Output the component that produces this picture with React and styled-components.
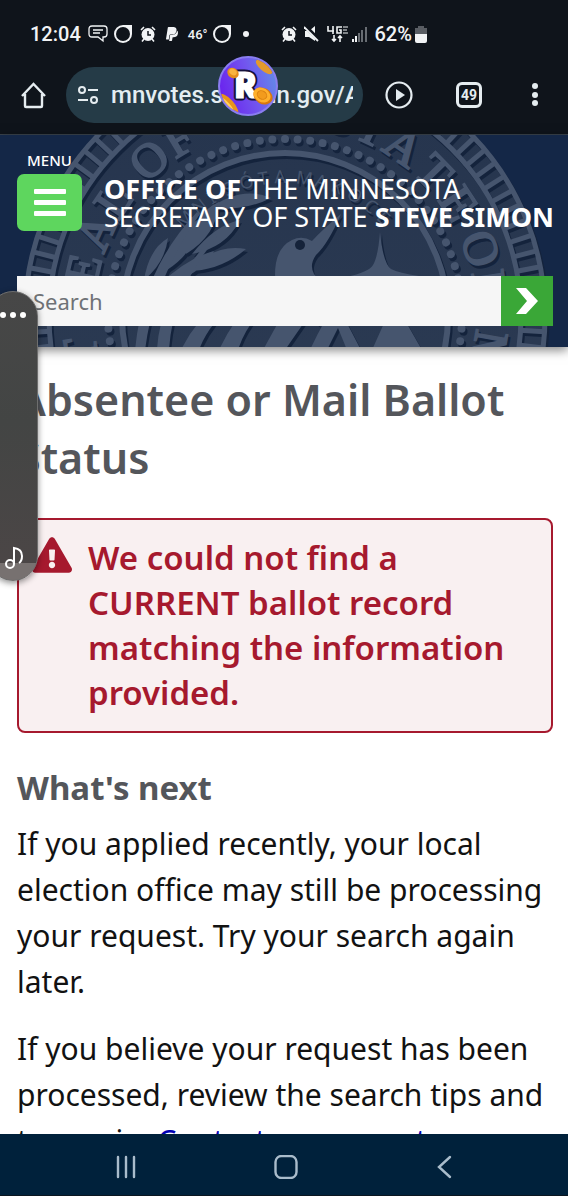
import React from 'react'
import styled, { createGlobalStyle } from 'styled-components'
import { FaPaypal, FaExclamationTriangle } from 'react-icons/fa'

const GlobalStyle = createGlobalStyle`
  * {
    box-sizing: border-box;
  }
  body {
    margin: 0;
    background: #ffffff;
    font-family: "Noto Sans", "Open Sans", sans-serif;
  }
  button {
    border: 0;
    padding: 0;
    background: none;
    color: inherit;
    font: inherit;
    cursor: pointer;
  }
  svg {
    display: block;
    flex: none;
  }
`;

const Phone = styled.div`
  position: relative;
  display: flex;
  flex-direction: column;
  height: 100vh;
  padding-bottom: 4px;
  overflow: hidden;
`;

const StatusBar = styled.div`
  display: flex;
  align-items: center;
  height: 56px;
  padding: 12px 29px 0 30px;
  background: #0f141b;
  color: #f1f3f5;
  font-family: Roboto, sans-serif;
  font-size: 20px;
  font-weight: 500;
`;

const StatusGroup = styled.div`
  display: flex;
  align-items: center;
  gap: ${props => props.gap};
  margin-left: ${props => props.indent || '0'};
`;

const Temperature = styled.span`
  font-size: 13px;
`;

const BrowserBar = styled.div`
  display: flex;
  align-items: center;
  height: 79px;
  padding: 0 30px 0 20px;
  background: #0f141b;
  border-bottom: 1px solid #3a434c;
  color: #e5ecf0;
`;

const AddressBar = styled.label`
  display: flex;
  align-items: center;
  flex: 1;
  min-width: 0;
  height: 56px;
  margin: 0 22px 0 19px;
  padding: 0 10px 0 11px;
  gap: 12px;
  border-radius: 28px;
  background: #253b47;
`;

const AddressInput = styled.input`
  flex: 1;
  min-width: 0;
  padding: 0;
  border: 0;
  background: none;
  outline: none;
  color: #e3edf2;
  font-family: Roboto, sans-serif;
  font-size: 24px;
  font-weight: 500;
`;

const BrowserActions = styled.div`
  display: flex;
  align-items: center;
  gap: 43px;
`;

const TabCount = styled.button`
  width: 26px;
  height: 26px;
  margin-right: 7px;
  border: 3px solid #e5ecf0;
  border-radius: 6px;
  font-family: Roboto, sans-serif;
  font-size: 14px;
  font-weight: 700;
  line-height: 20px;
`;

const SiteHeader = styled.header`
  position: relative;
  flex: none;
  height: 212px;
  padding: 16px 15px 0 17px;
  background: #142747;
  box-shadow: 0 3px 10px rgba(0, 0, 0, 0.5);
  z-index: 1;
`;

const SealLayer = styled.div`
  position: absolute;
  inset: 0;
  display: flex;
  justify-content: center;
  overflow: hidden;
`;

const HeaderRow = styled.div`
  position: relative;
  display: flex;
  align-items: flex-end;
  gap: 22px;
  height: 80px;
`;

const MenuButton = styled.button`
  display: flex;
  flex-direction: column;
  align-items: center;
  gap: 3px;
  width: 65px;
  color: #ffffff;
  font-size: 15px;
  font-weight: 500;
  line-height: 21px;
`;

const MenuIcon = styled.span`
  display: flex;
  flex-direction: column;
  align-items: center;
  justify-content: center;
  gap: 6px;
  width: 65px;
  height: 57px;
  border-radius: 7px;
  background: #5ed65e;
`;

const MenuLine = styled.span`
  width: 32px;
  height: 5px;
  border-radius: 1px;
  background: #ffffff;
`;

const OfficeName = styled.div`
  color: #ffffff;
  font-size: 27px;
  font-weight: 400;
  line-height: 28px;
  white-space: nowrap;
`;

const SearchForm = styled.form`
  position: relative;
  display: flex;
  height: 50px;
  margin-top: 45px;
`;

const SearchInput = styled.input`
  flex: 1;
  min-width: 0;
  padding: 0 16px;
  border: 0;
  border-radius: 0;
  outline: none;
  background: #f6f6f6;
  font-family: inherit;
  font-size: 22px;
  &::placeholder {
    color: #6f7276;
    opacity: 1;
  }
`;

const SearchButton = styled.button`
  display: flex;
  align-items: center;
  justify-content: center;
  width: 52px;
  background: #3aa737;
`;

const Content = styled.main`
  flex: 1;
  min-height: 0;
  padding: 24px 15px 0 17px;
  background: #ffffff;
  color: #121212;
  overflow: hidden;
`;

const Title = styled.h1`
  margin: 0 0 31px;
  color: #54565b;
  font-size: 43px;
  font-weight: 650;
  line-height: 58px;
`;

const Alert = styled.div`
  display: flex;
  gap: 16px;
  padding: 15px 20px 16px 13px;
  border: 2px solid #a6192e;
  border-radius: 8px;
  background: #f9f0f1;
  color: #a6192e;
  font-size: 33px;
  font-weight: 650;
  line-height: 45px;
`;

const Subtitle = styled.h2`
  margin: 32px 0 10px;
  color: #54565b;
  font-size: 33px;
  font-weight: 700;
  line-height: 46px;
`;

const Paragraph = styled.p`
  margin: 0 0 21px;
  font-size: 30px;
  line-height: 46px;
`;

const ContactLink = styled.a`
  color: #0000b4;
`;

const SystemNav = styled.nav`
  display: flex;
  align-items: center;
  justify-content: space-between;
  flex: none;
  height: 62px;
  padding: 4px 111px 0 114px;
  background: #00213b;
  border-bottom: 1px solid #0b1620;
  color: #a9bccb;
`;

const SidePanel = styled.aside`
  position: absolute;
  top: 291px;
  left: -12px;
  display: flex;
  flex-direction: column;
  justify-content: space-between;
  width: 50px;
  height: 290px;
  border-radius: 25px;
  border: 1px solid #6e6e6e;
  background: linear-gradient(#474747, #434544 45%, #4b4646 94%, #777170 94%);
  box-shadow: 0 2px 6px rgba(0, 0, 0, 0.45);
  overflow: hidden;
  z-index: 2;
`;

const Dots = styled.button`
  display: flex;
  gap: 4px;
  padding: 20px 0 0 11px;
`;

const Dot = styled.span`
  width: 6px;
  height: 6px;
  border-radius: 50%;
  background: #ffffff;
`;

const MusicButton = styled.button`
  padding: 0 0 10px 15px;
`;

const FloatingBadge = styled.div`
  position: absolute;
  top: 56px;
  left: 218px;
  z-index: 2;
`;

const ringLetters = [
  ['T', -100], ['E', -77], ['A', -66], ['L', -56], ['O', -41], ['F', -31],
  ['S', 16], ['T', 25], ['A', 35], ['T', 46], ['E', 57], ['O', 71], ['F', 81], ['M', 100]
]

const mottoLetters = [
  ['M', -46], ['N', -38], ['I', -32], ['S', -24], ['Ó', -16], ['T', -9], ['A', -2],
  ['M', 8], ['A', 15], ['K', 22], ['O', 30], ['C', 38], ['E', 45]
]

// evenly spaced angles for the beads and rim blocks
const steps = (count) => Array.from({ length: count }, (_, i) => (i * 360) / count)

const SealShapes = ({ tone }) => (
  <g fill={tone} stroke="none">
    <g fill="none" stroke={tone}>
      <circle r="260" strokeWidth="5" />
      <circle r="236" strokeWidth="5" />
      <circle r="163" strokeWidth="6" />
    </g>
    {steps(100).map(a => (
      <rect key={a} x="-3" y="-260" width="5" height="25" transform={`rotate(${a})`} />
    ))}
    {steps(88).map(a => (
      <circle key={a} cy="-177" r="4" transform={`rotate(${a})`} />
    ))}
    {ringLetters.map(([letter, a]) => (
      <text key={a} y="-191" fontSize="48" fontFamily="Liberation Serif, serif" stroke={tone} strokeWidth="2" textAnchor="middle" transform={`rotate(${a})`}>
        {letter}
      </text>
    ))}
    {mottoLetters.map(([letter, a]) => (
      <text key={a} y="-133" fontSize="18" fontFamily="Noto Sans, sans-serif" textAnchor="middle" transform={`rotate(${a})`}>
        {letter}
      </text>
    ))}
    {/* loon */}
    <path d="M-9-28 Q-14-66 7-76 Q17-81 27-75 Q38-87 56-102 Q43-72 31-61 Q24-51 29-42 L66-2 L35-18 L52 8 L25-14 L34 9 L10-10 Z" />
    {/* north star */}
    <path d="M95-84 Q98-53 106-47 Q114-43 134-40 Q105-35 96-28 Q87-36 61-39 Q84-44 88-51 Q93-59 95-84 Z" />
    {/* wheat on the left */}
    <path d="M-141-36 Q-136-67-117-78 Q-120-53-141-36 M-126-31 Q-98-58-71-65 Q-84-39-126-31 M-118-46 Q-111-84-86-97 Q-88-65-118-46 M-99-62 Q-91-104-66-114 Q-68-81-99-62 M-93-62 Q-70-91-45-96 Q-59-68-93-62 M-97-45 Q-70-73-39-67 Q-65-45-97-45 M-76-107 Q-44-131-14-118 Q-39-105-76-107 Z" />
    <path d="M-150 35 Q-143-46-88-104 L-85-102 Q-132-35-140 35 Z M-128 35 Q-126-22-70-82 L-68-79 Q-113-25-116 35 Z" />
    <circle cx="-37" cy="-26" r="13" />
    {/* fields and water under the search bar */}
    <path d="M-104 34 Q-90 5-65-14 L-50-14 Q-77 9-86 34 Z M-66 34 Q-52 4-32-15 L-12-15 Q-38 5-47 34 Z M-22 34 L5-15 L34-15 L0 34 Z M25 34 Q38 5 52-12 L76 34 L62 34 L53 12 L42 34 Z M87 34 L109-15 L137 34 Z" />
  </g>
)

const Seal = () => (
  <SealLayer>
    <svg width="568" height="212" viewBox="0 0 568 212" aria-hidden="true">
      <defs>
        <linearGradient id="metal" x1="0" y1="0" x2="0" y2="1">
          <stop offset="0" stopColor="#25344d" />
          <stop offset="1" stopColor="#2e3d55" />
        </linearGradient>
      </defs>
      <g transform="translate(285 181)">
        <circle r="262" fill="url(#metal)" />
        <g transform="translate(2 3)"><SealShapes tone="#14233c" /></g>
        <SealShapes tone="#46556e" />
        <circle cx="15" cy="-71" r="5" fill="#15233a" />
        <path d="M-5-34 L9-8 M6-38 L23-8 M17-38 L39-13 M27-39 L50-13" stroke="#1b2a42" strokeWidth="3" />
      </g>
    </svg>
  </SealLayer>
)

const MessageIcon = () => (
  <svg width="20" height="18" viewBox="0 0 20 18" fill="none" stroke="#f1f3f5" strokeWidth="1.3">
    <path d="M4 1H16Q19 1 19 4V9Q19 12 16 12H15V16L10 12H4Q1 12 1 9V4Q1 1 4 1Z M5 5H15 M5 8H12" />
  </svg>
)

const RingIcon = () => (
  <svg width="20" height="20" viewBox="0 0 20 20">
    <path d="M10 1H19V10A9 9 0 1 1 10 1Z" fill="#f1f3f5" />
    <circle cx="10" cy="10" r="7" fill="#0f141b" />
  </svg>
)

const AlarmIcon = () => (
  <svg width="16" height="16" viewBox="0 0 16 16">
    <circle cx="8" cy="8.5" r="6.5" fill="#f1f3f5" />
    <path d="M1 4L4 1M15 4L12 1M4 13L2 15.5M12 13L14 15.5" stroke="#f1f3f5" strokeWidth="1.6" />
    <path d="M8 5V9H11" fill="none" stroke="#0f141b" strokeWidth="1.5" />
  </svg>
)

const MuteIcon = () => (
  <svg width="16" height="16" viewBox="0 0 16 16">
    <path d="M1 5H5L11 0V15L5 11H1Z" fill="#f1f3f5" />
    <path d="M1 0L16 15" stroke="#0f141b" strokeWidth="4" />
    <path d="M0 1L14 15" stroke="#f1f3f5" strokeWidth="1.8" />
  </svg>
)

const NetworkIcon = () => (
  <svg width="21" height="17" viewBox="0 0 21 17" fill="none" stroke="#f1f3f5" strokeWidth="1.6">
    <path d="M1 0V5H7M6 0V8M15 1H10V7H14V4H12" />
    <path d="M16 1H21M16 4H20M16 7H21" strokeWidth="1.2" />
    <path d="M7 9V15M5 13L7 15L9 13M13 16V10M11 12L13 10L15 12" />
  </svg>
)

const SignalIcon = () => (
  <svg width="15" height="16" viewBox="0 0 15 16">
    <path d="M0 13H2V16H0ZM3 10H5V16H3Z" fill="#f1f3f5" />
    <path d="M6 7H8V16H6ZM9 4H11V16H9ZM13 1H15V16H13Z" fill="#686d73" />
  </svg>
)

const BatteryIcon = () => (
  <svg width="12" height="17" viewBox="0 0 12 17">
    <path d="M3 0H9V2H12V8H0V2H3Z" fill="#595d63" />
    <path d="M0 8H12V15Q12 17 10 17H2Q0 17 0 15Z" fill="#f1f3f5" />
  </svg>
)

const HomeIcon = () => (
  <svg width="27" height="27" viewBox="0 0 27 27" fill="none" stroke="#e5ecf0" strokeWidth="2.4">
    <path d="M2 14L13.500 2L25 14M5 12V24Q5 25 6 25H21Q22 25 22 24V12" />
  </svg>
)

const TuneIcon = () => (
  <svg width="22" height="18" viewBox="0 0 22 18" fill="none" stroke="#e5ecf0" strokeWidth="2">
    <circle cx="5" cy="4" r="3" />
    <path d="M11 4H21M1 14H11" />
    <circle cx="17" cy="14" r="3" />
  </svg>
)

const PlayIcon = () => (
  <svg width="28" height="28" viewBox="0 0 28 28">
    <circle cx="14" cy="14" r="12.500" fill="none" stroke="#e5ecf0" strokeWidth="2.200" />
    <path d="M11 8L20 14L11 20Z" fill="#e5ecf0" />
  </svg>
)

const MoreIcon = () => (
  <svg width="6" height="24" viewBox="0 0 6 24" fill="#e5ecf0">
    <circle cx="3" cy="3" r="3" />
    <circle cx="3" cy="12" r="3" />
    <circle cx="3" cy="20" r="3" />
  </svg>
)

const MusicIcon = () => (
  <svg width="20" height="24" viewBox="0 0 20 24" fill="none" stroke="#ffffff" strokeWidth="2">
    <circle cx="6" cy="18" r="4" />
    <path d="M10 18V2Q18 3 18 10Q18 15 15 17" />
  </svg>
)

const CoinBadge = () => (
  <svg width="60" height="60" viewBox="0 0 60 60" role="img" aria-label="R">
    <defs>
      <linearGradient id="badge" x1="0" y1="0.600" x2="1" y2="0.300">
        <stop offset="0" stopColor="#6a22ee" />
        <stop offset="0.550" stopColor="#7256ee" />
        <stop offset="1" stopColor="#628ce8" />
      </linearGradient>
      <clipPath id="round"><circle cx="30" cy="30" r="28" /></clipPath>
    </defs>
    <circle cx="30" cy="30" r="29" fill="url(#badge)" stroke="#8a7df0" strokeWidth="2" />
    <g clipPath="url(#round)">
      <ellipse cx="48" cy="9" rx="11" ry="6" fill="#b66a16" transform="rotate(40 48 9)" />
      <ellipse cx="46" cy="11" rx="10" ry="4" fill="#e49a2c" transform="rotate(40 46 11)" />
      <ellipse cx="10" cy="49" rx="14" ry="6" fill="#e8951c" transform="rotate(48 10 49)" />
      <ellipse cx="8" cy="50" rx="12" ry="4" fill="#ffd05b" transform="rotate(48 8 50)" />
    </g>
    <text x="17" y="41" fontFamily="Lato, sans-serif" fontSize="32" fontWeight="900" fill="#ffffff" stroke="#15123c" strokeWidth="7" paintOrder="stroke" strokeLinejoin="round">R</text>
    <text x="17" y="41" fontFamily="Lato, sans-serif" fontSize="32" fontWeight="900" fill="#ffffff" stroke="#ffffff" strokeWidth="3" aria-hidden="true">R</text>
    <ellipse cx="15" cy="17" rx="6" ry="5" fill="#e58d1c" transform="rotate(35 15 17)" />
    <ellipse cx="15" cy="16" rx="4" ry="3" fill="#f9b33e" transform="rotate(35 15 16)" />
    <ellipse cx="45" cy="40" rx="10" ry="8" fill="#d9780d" transform="rotate(30 45 40)" />
    <ellipse cx="44" cy="39" rx="9" ry="7" fill="#ffb02c" transform="rotate(30 44 39)" />
    <ellipse cx="44" cy="39" rx="5" ry="4" fill="#f29b1d" stroke="#dc8414" transform="rotate(30 44 39)" />
  </svg>
)

const App = () => {
  return (
    <>
      <GlobalStyle />
      <Phone>
        <StatusBar>
          12:04
          <StatusGroup gap="5px" indent="7px">
            <MessageIcon />
            <RingIcon />
          </StatusGroup>
          <StatusGroup gap="8px" indent="7px">
            <AlarmIcon />
            <FaPaypal size={16} />
            <Temperature>46°</Temperature>
          </StatusGroup>
          <StatusGroup gap="11px" indent="4px">
            <RingIcon />
            <svg width="6" height="6"><circle cx="3" cy="3" r="3" fill="#f1f3f5" /></svg>
          </StatusGroup>
          <StatusGroup gap="7px" indent="32px">
            <AlarmIcon />
            <MuteIcon />
            <NetworkIcon />
          </StatusGroup>
          <StatusGroup gap="8px" indent="4px">
            <SignalIcon />
            62%
          </StatusGroup>
          <StatusGroup gap="0" indent="3px">
            <BatteryIcon />
          </StatusGroup>
        </StatusBar>

        <BrowserBar>
          <button aria-label="Home"><HomeIcon /></button>
          <AddressBar>
            <TuneIcon />
            <AddressInput type="text" aria-label="Address" defaultValue="mnvotes.sos.mn.gov/AbsenteeStatus" />
          </AddressBar>
          <BrowserActions>
            <button aria-label="Play"><PlayIcon /></button>
            <TabCount aria-label="Tabs">49</TabCount>
            <button aria-label="More"><MoreIcon /></button>
          </BrowserActions>
        </BrowserBar>

        <SiteHeader>
          <Seal />
          <HeaderRow>
            <MenuButton>
              MENU
              <MenuIcon>
                <MenuLine />
                <MenuLine />
                <MenuLine />
              </MenuIcon>
            </MenuButton>
            <OfficeName>
              <b>OFFICE OF</b> THE MINNESOTA<br />
              SECRETARY OF STATE <b>STEVE SIMON</b>
            </OfficeName>
          </HeaderRow>
          <SearchForm onSubmit={e => e.preventDefault()}>
            <SearchInput type="text" aria-label="Search" placeholder="Search" />
            <SearchButton type="submit" aria-label="Submit search">
              <svg width="22" height="26" viewBox="0 0 22 26" fill="#ffffff">
                <path d="M0 0H10L22 13L10 26H0L11 13Z" />
              </svg>
            </SearchButton>
          </SearchForm>
        </SiteHeader>

        <Content>
          <Title>Absentee or Mail Ballot Status</Title>
          <Alert role="alert">
            <FaExclamationTriangle size={40} />
            <span>We could not find a CURRENT ballot record matching the information provided.</span>
          </Alert>
          <Subtitle>What's next</Subtitle>
          <Paragraph>
            If you applied recently, your local election office may still be processing your request. Try your search again later.
          </Paragraph>
          <Paragraph>
            If you believe your request has been processed, review the search tips and try again. <ContactLink href="#contact">Contact your county</ContactLink>
          </Paragraph>
        </Content>

        <SystemNav>
          <button aria-label="Recent apps">
            <svg width="24" height="24" viewBox="0 0 24 24" stroke="#a9bccb" strokeWidth="2.400" strokeLinecap="round">
              <path d="M4 2V22M12 2V22M20 2V22" />
            </svg>
          </button>
          <button aria-label="Home screen">
            <svg width="24" height="24" viewBox="0 0 24 24" fill="none" stroke="#a9bccb" strokeWidth="2.400">
              <rect x="1.500" y="1" width="21" height="22" rx="6" />
            </svg>
          </button>
          <button aria-label="Back">
            <svg width="24" height="24" viewBox="0 0 24 24" fill="none" stroke="#a9bccb" strokeWidth="2.400" strokeLinecap="round">
              <path d="M17 2L6 12L17 22" />
            </svg>
          </button>
        </SystemNav>

        <SidePanel>
          <Dots aria-label="Panel options">
            <Dot />
            <Dot />
            <Dot />
          </Dots>
          <MusicButton aria-label="Music"><MusicIcon /></MusicButton>
        </SidePanel>
        <FloatingBadge><CoinBadge /></FloatingBadge>
      </Phone>
    </>
  )
}

export default App
